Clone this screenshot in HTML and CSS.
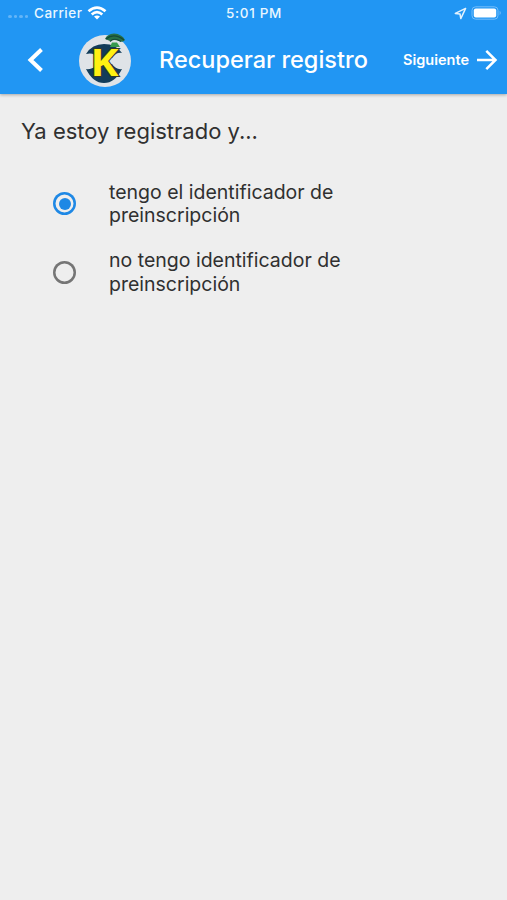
FILE: index.html
```html
<!DOCTYPE html>
<html lang="es">
<head>
    <meta charset="UTF-8">
    <meta name="viewport" content="width=device-width, initial-scale=1.0">
    <title>Recuperar registro</title>
    <link rel="stylesheet" href="styles.css">
</head>
<body>
    <header class="header">
        <!-- Status bar -->
        <div class="status-bar">
            <div class="status-left">
                <span class="signal"><i></i><i></i><i></i><i></i></span>
                <span class="carrier">Carrier</span>
                <svg class="wifi" width="20" height="14" viewBox="0 0 20 14" fill="none" stroke="#fff" stroke-width="2.7">
                    <path d="M1.5 5.3Q10 -2.2 18.5 5.3"/>
                    <path d="M4.7 8.5Q10 3.9 15.3 8.5"/>
                    <path d="M7 10.6Q10 8.3 13 10.6L10 13.6z" fill="#fff" stroke="none"/>
                </svg>
            </div>
            <span class="time">5:01 PM</span>
            <div class="status-right">
                <svg width="13" height="13" viewBox="0 0 13 13" fill="none" stroke="#e3f2fd" stroke-width="1.5" stroke-linejoin="round">
                    <path d="M11.6 1.4L1.3 6.4L6 7L6.8 11.6z"/>
                </svg>
                <svg width="31" height="14" viewBox="0 0 31 14">
                    <rect x="1" y=".8" width="26" height="12.4" rx="3.6" fill="none" stroke="#74bdfa"/>
                    <rect x="2.8" y="2.6" width="22.4" height="8.8" rx="2" fill="#fff"/>
                    <path d="M28.6 4.8Q31 7 28.6 9.2z" fill="#74bdfa"/>
                </svg>
            </div>
        </div>

        <!-- Toolbar -->
        <nav class="toolbar">
            <a href="#" class="back" aria-label="Volver">
                <svg width="18" height="26" viewBox="0 0 18 26" fill="none" stroke="#fff" stroke-width="4">
                    <path d="M15.5 2.5L4.5 13L15.5 23.5"/>
                </svg>
            </a>
            <svg class="logo" width="54" height="56" viewBox="0 0 54 56">
                <circle cx="27" cy="29" r="26" fill="#dfe3e7"/>
                <path d="M8 22Q14 12 26 12T44 21Q38 20 34 26H20Q16 20 8 22z" fill="#123c59"/>
                <path d="M8 37Q15 38 20 32H34Q38 38 44 37Q37 51 26 51T8 37z" fill="#123c59"/>
                <path d="M27 7Q29 2 36 1.5Q44 2 47 8Q45 11 41 9Q36 7 32 9z" fill="#287047"/>
                <path d="M28 7Q36 .5 46 8M32 9.5Q36 5 43 9.5" fill="none" stroke="#164936" stroke-width="1.2"/>
                <path d="M32 15L34 10.5H39L42 15z" fill="#37994d"/>
                <text class="logo-letter" x="12.5" y="43.5" textLength="28" lengthAdjust="spacingAndGlyphs">K</text>
            </svg>
            <h1 class="title">Recuperar registro</h1>
            <a href="#" class="next">
                <span>Siguiente</span>
                <svg width="22" height="22" viewBox="0 0 22 22" fill="none" stroke="#fff" stroke-width="2.5">
                    <path d="M1 11H19.5M10.3 1.8L19.5 11L10.3 20.2"/>
                </svg>
            </a>
        </nav>
    </header>

    <!-- Options -->
    <main class="content">
        <h2 class="question">Ya estoy registrado y...</h2>
        <form class="options">
            <label class="option">
                <input type="radio" name="registro" checked>
                <span class="option-text">tengo el identificador de<br>preinscripción</span>
            </label>
            <label class="option">
                <input type="radio" name="registro">
                <span class="option-text">no tengo identificador de<br>preinscripción</span>
            </label>
        </form>
    </main>
</body>
</html>
```

FILE: styles.css
```css
/* General Styles */
* {
    margin: 0;
    padding: 0;
    box-sizing: border-box;
}

body {
    min-height: 100vh;
    background-color: #eeeeee;
    font-family: Inter, Roboto, sans-serif;
    color: #303030;
}

a {
    color: white;
    text-decoration: none;
}

svg {
    display: block;
    flex-shrink: 0;
}

/* Header */
.header {
    height: 94px;
    background-color: #2196f3;
    color: white;
    box-shadow: 0 1px 3px rgba(0, 0, 0, 0.3);
}

.status-bar {
    display: grid;
    grid-template-columns: 1fr auto 1fr;
    align-items: center;
    height: 26px;
    padding: 0 5px 0 8px;
    font-size: 13.5px;
    font-weight: 500;
    letter-spacing: 0.5px;
    color: #e9f6ff;
}

.carrier,
.time {
    padding-bottom: 1px;
}

.time {
    margin-left: -2px;
    letter-spacing: 0.7px;
}

.status-left,
.status-right {
    display: flex;
    align-items: center;
}

.status-right {
    justify-content: flex-end;
    gap: 4px;
}

.signal {
    display: flex;
    gap: 2px;
    width: 26px;
    padding-top: 7px;
}

.signal i {
    width: 3.5px;
    height: 3px;
    border-radius: 50%;
    background-color: #64b5f7;
}

.wifi {
    margin-left: 5px;
}

/* Toolbar */
.toolbar {
    display: flex;
    align-items: center;
    height: 68px;
    padding: 0 9px 0 26px;
}

.logo {
    margin: 0 27px 0 34px;
}

.logo-letter {
    font-family: "Open Sans", sans-serif;
    font-size: 38px;
    font-weight: 700;
    fill: #fff112;
    stroke: #34372a;
    stroke-width: 2px;
    paint-order: stroke;
}

.title {
    padding-bottom: 2px;
    font-size: 23.5px;
    font-weight: 500;
    white-space: nowrap;
}

.next {
    display: flex;
    align-items: center;
    gap: 7px;
    margin-left: auto;
    font-size: 14.5px;
    font-weight: 600;
}

.next span {
    padding-bottom: 2px;
}

/* Content */
.content {
    padding: 23px 21px;
}

.question {
    font-size: 22px;
    font-weight: 400;
    line-height: 28px;
}

.options {
    padding: 35px 32px 0;
}

.option {
    display: flex;
    align-items: center;
    height: 47px;
    margin-bottom: 21.5px;
    cursor: pointer;
}

.option input {
    appearance: none;
    display: grid;
    place-items: center;
    width: 23px;
    height: 23px;
    margin-right: 33px;
    border-radius: 50%;
    box-shadow: inset 0 0 0 2.5px #757575;
}

.option input:checked {
    box-shadow: inset 0 0 0 2.5px #1e88e5;
}

.option input:checked::before {
    content: "";
    width: 12px;
    height: 12px;
    border-radius: 50%;
    background-color: #1e88e5;
}

.option-text {
    padding-top: 1px;
    font-size: 19.5px;
    line-height: 23.5px;
}
```
